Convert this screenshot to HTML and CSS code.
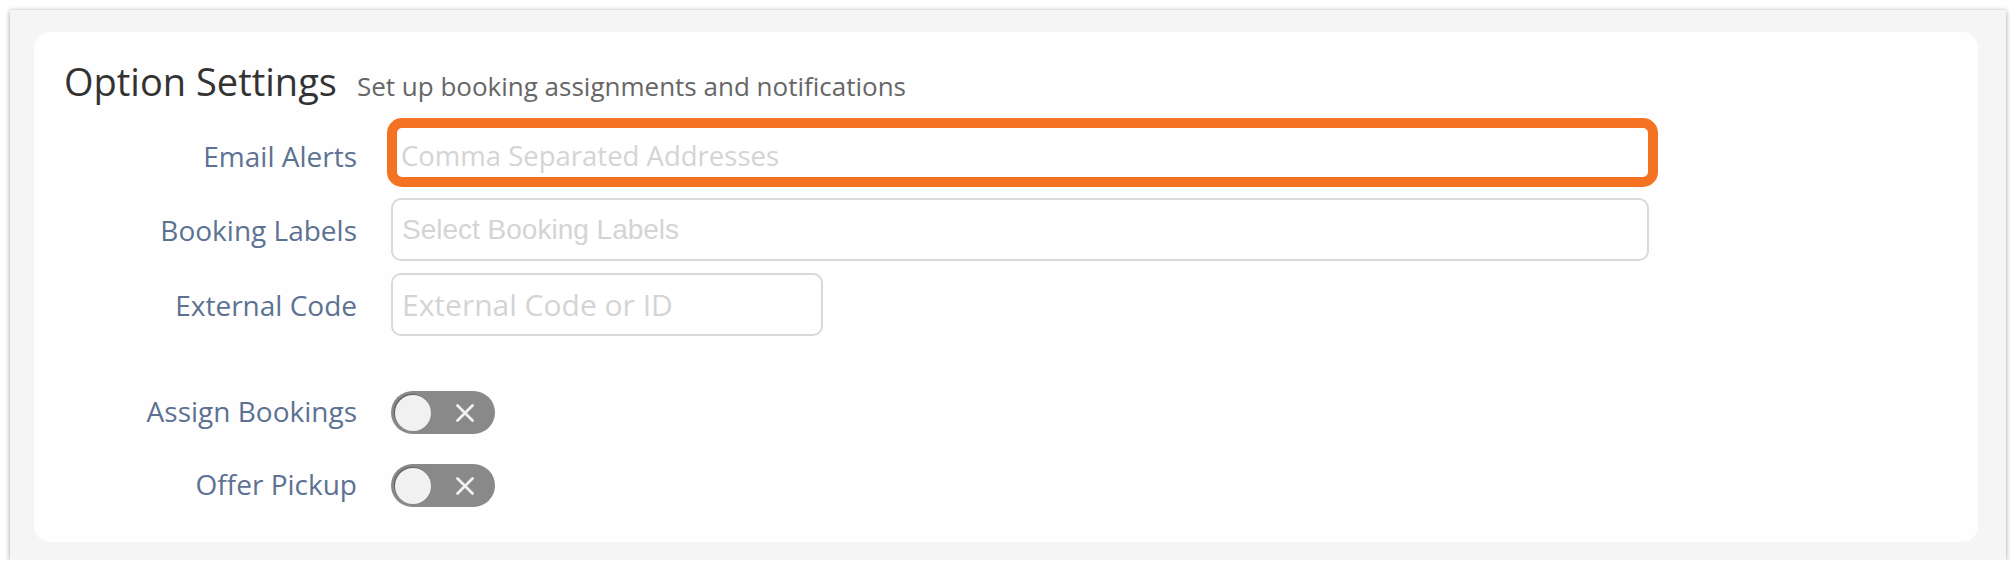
FILE: index.html
```html
<!DOCTYPE html>
<html lang="en">
<head>
<meta charset="utf-8">
<title>Option Settings</title>
<link rel="stylesheet" href="styles.css">
</head>
<body>
<div class="window">
  <section class="card">
    <header class="head">
      <h2 class="title">Option Settings</h2>
      <span class="subtitle">Set up booking assignments and notifications</span>
    </header>
    <div class="row row-email">
      <label class="label label-email">Email Alerts</label>
      <input class="input input-focus" type="text" placeholder="Comma Separated Addresses">
    </div>
    <div class="row row-field">
      <label class="label">Booking Labels</label>
      <input class="input input-wide input-select" type="text" placeholder="Select Booking Labels">
    </div>
    <div class="row row-field">
      <label class="label">External Code</label>
      <input class="input input-short" type="text" placeholder="External Code or ID">
    </div>
    <div class="row row-toggle row-toggle-first">
      <span class="label label-toggle">Assign Bookings</span>
      <span class="toggle"><span class="knob"></span><svg class="x" viewBox="0 0 20 20" width="20" height="20"><path d="M2.5 2.5 L17.5 17.5 M17.5 2.5 L2.5 17.5" stroke="#f2f2f2" stroke-width="2.8" stroke-linecap="round" fill="none"/></svg></span>
    </div>
    <div class="row row-toggle">
      <span class="label label-toggle">Offer Pickup</span>
      <span class="toggle"><span class="knob"></span><svg class="x" viewBox="0 0 20 20" width="20" height="20"><path d="M2.5 2.5 L17.5 17.5 M17.5 2.5 L2.5 17.5" stroke="#f2f2f2" stroke-width="2.8" stroke-linecap="round" fill="none"/></svg></span>
    </div>
  </section>
</div>
</body>
</html>
```
FILE: styles.css
```css
html, body {
  margin: 0;
  padding: 0;
  background: #ffffff;
}
body {
  padding: 10px 0 0 10px;
  font-family: "Open Sans", "Liberation Sans", sans-serif;
}
.window {
  width: 1996px;
  height: 550px;
  box-sizing: border-box;
  background: #f5f5f5;
  padding: 22px 28px 18px 24px;
  box-shadow: 0 1px 5px rgba(0, 0, 0, 0.38);
}
.card {
  background: #fefefe;
  border-radius: 16px;
  height: 510px;
  box-sizing: border-box;
  padding: 24px 30px 0 30px;
}
.head {
  display: flex;
  align-items: baseline;
  gap: 20px;
  margin-bottom: 12px;
  height: 50px;
}
.title {
  margin: 0;
  font-weight: 400;
  font-size: 38px;
  line-height: 50px;
  color: #333333;
}
.subtitle {
  font-size: 26px;
  color: #666666;
}
.row {
  display: flex;
  align-items: center;
}
.label {
  width: 293px;
  flex: none;
  text-align: right;
  font-size: 28px;
  color: #5d7292;
  margin-right: 34px;
}
.label-email {
  padding-top: 6px;
}
.label-toggle {
  padding-bottom: 3px;
}
.row-email {
  height: 69px;
}
.row-field {
  height: 63px;
  margin-top: 11px;
}
.row-field + .row-field {
  margin-top: 12px;
}
.input {
  box-sizing: border-box;
  height: 63px;
  border: 2px solid #d9d9d9;
  border-radius: 10px;
  background: #ffffff;
  padding: 0 9px;
  font-family: "Open Sans", sans-serif;
  font-size: 27.5px;
  color: #333;
  outline: none;
}
.input::placeholder {
  color: #d4d4d4;
  opacity: 1;
}
.input-focus {
  width: 1271px;
  height: 69px;
  margin-left: -4px;
  border: 10px solid #f47322;
  border-radius: 15px;
  padding: 6px 4px 0 4px;
}
.input-wide {
  width: 1258px;
}
.input-select {
  font-family: "Liberation Sans", Arial, sans-serif;
  font-size: 28px;
}
.input-short {
  width: 432px;
  font-size: 30px;
}
.row-toggle {
  height: 43px;
  margin-top: 30px;
}
.row-toggle-first {
  margin-top: 55px;
}
.toggle {
  display: flex;
  align-items: center;
  width: 104px;
  height: 43px;
  box-sizing: border-box;
  padding: 0 4px;
  background: #898989;
  border-radius: 22px;
}
.knob {
  width: 36px;
  height: 36px;
  border-radius: 50%;
  background: #f1f1f1;
  box-shadow: -1px -1px 1px rgba(0, 0, 0, 0.3);
  flex: none;
}
.x {
  margin-left: 24px;
  display: block;
}
```
